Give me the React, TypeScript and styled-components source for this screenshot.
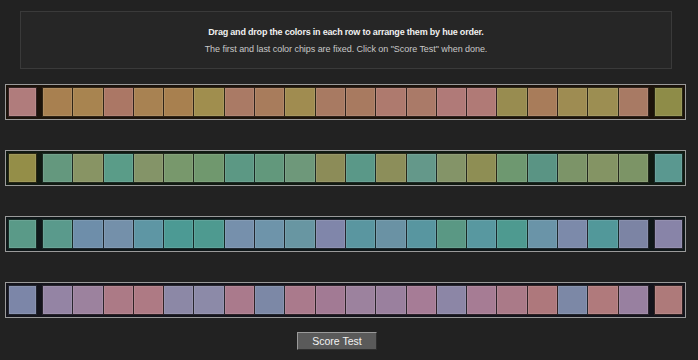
import React from "react";
import styled, { createGlobalStyle } from "styled-components";

const GlobalStyle = createGlobalStyle`
  html, body {
    margin: 0;
    padding: 0;
    background: #222222;
  }
  body {
    font-family: "Liberation Sans", Arial, sans-serif;
  }
`;

const rows: { tint: string; chips: string[] }[] = [
  {
    tint: "#1c130b",
    chips: [
      "#b07c7c", "#a88050", "#a88450", "#ab7765", "#a88252", "#a8804f",
      "#a08e4e", "#aa7a65", "#a87c5c", "#a08c50", "#a87a62", "#a87a60",
      "#ae7a6e", "#aa7a68", "#b07a78", "#b07a76", "#988c50", "#a87c5a",
      "#9e8c52", "#9c8e52", "#a87a64", "#8e8c48",
    ],
  },
  {
    tint: "#111a12",
    chips: [
      "#948e48", "#64987e", "#889464", "#5a9c88", "#849468", "#78986c",
      "#70986e", "#5c9884", "#62987c", "#6e987a", "#8c8c58", "#5a9888",
      "#8c8e5a", "#64988a", "#849468", "#8e8e54", "#6e9870", "#5a9484",
      "#7c9468", "#849464", "#7c9466", "#5a9890",
    ],
  },
  {
    tint: "#10181a",
    chips: [
      "#5a9a88", "#5a9a8c", "#6e8eaa", "#7490aa", "#5e96a4", "#4c9a94",
      "#4e9a90", "#7690ac", "#6e94aa", "#6896a2", "#8086aa", "#5a96a0",
      "#6a92a4", "#5896a0", "#5a9884", "#5898a0", "#4e9a90", "#6a94a8",
      "#7c8aaa", "#52989a", "#7c84a4", "#8884a8",
    ],
  },
  {
    tint: "#14141c",
    chips: [
      "#7c86a8", "#9484a4", "#9c829e", "#ac7a86", "#ae7a84", "#8c88a6",
      "#8c8aa8", "#aa7a8c", "#7c88a6", "#aa7a8c", "#a27a94", "#9c829e",
      "#9a809e", "#a67c96", "#8c86a6", "#a67c94", "#aa7a88", "#ae787c",
      "#7c88a6", "#b07a7c", "#9880a0", "#ae7a7a",
    ],
  },
];

const Page = styled.div`
  width: 691px;
  padding-top: 11px;
  display: flex;
  flex-direction: column;
  align-items: center;
`;

const Instructions = styled.div`
  width: 650px;
  height: 41px;
  margin-left: 1px;
  padding-top: 15px;
  border: 1px solid #3a3a3a;
  background: #262626;
  display: flex;
  flex-direction: column;
  align-items: center;
`;

const Lead = styled.div`
  font-size: 9px;
  font-weight: bold;
  letter-spacing: -0.2px;
  color: #f0f0f0;
  line-height: 11px;
`;

const Note = styled.div`
  font-size: 9px;
  letter-spacing: -0.05px;
  color: #c8c8c8;
  line-height: 11px;
  margin-top: 6px;
`;

const Rows = styled.div`
  margin-top: 15px;
  display: flex;
  flex-direction: column;
  gap: 30px;
`;

const Tray = styled.div<{ $tint: string }>`
  width: 675px;
  height: 30px;
  padding: 2px;
  border: 1px solid #9a9a9a;
  background: ${(p) => p.$tint};
  display: flex;
  gap: 5px;
`;

const Strip = styled.div`
  flex: 1;
  display: flex;
`;

const Chip = styled.div<{ $color: string; $fixed?: boolean }>`
  box-sizing: border-box;
  height: 30px;
  ${(p) => (p.$fixed ? "width: 29px;" : "flex: 1;")}
  background: ${(p) => p.$color};
  border: 1px solid rgba(0, 0, 0, 0.72);
  box-shadow: inset 0 0 0 1px rgba(255, 255, 255, 0.1);

  & + & {
    border-left: 0;
  }
`;

const ScoreButton = styled.button`
  align-self: flex-start;
  margin: 14px 0 0 297px;
  width: 80px;
  height: 18px;
  padding: 0;
  background: #5a5a5a;
  border: 1px solid;
  border-color: #9a9a9a #2e2e2e #2e2e2e #9a9a9a;
  color: #f2f2f2;
  font-family: "Liberation Sans", Arial, sans-serif;
  font-size: 10.5px;
  line-height: 16px;
  cursor: pointer;
`;

export default function App() {
  return (
    <>
      <GlobalStyle />
      <Page>
        <Instructions>
          <Lead>Drag and drop the colors in each row to arrange them by hue order.</Lead>
          <Note>The first and last color chips are fixed. Click on "Score Test" when done.</Note>
        </Instructions>
        <Rows>
          {rows.map((row, r) => {
            const first = row.chips[0];
            const last = row.chips[row.chips.length - 1];
            const middle = row.chips.slice(1, -1);
            return (
              <Tray key={r} $tint={row.tint}>
                <Chip $color={first} $fixed />
                <Strip>
                  {middle.map((c, i) => (
                    <Chip key={i} $color={c} />
                  ))}
                </Strip>
                <Chip $color={last} $fixed />
              </Tray>
            );
          })}
        </Rows>
        <ScoreButton>Score Test</ScoreButton>
      </Page>
    </>
  );
}
